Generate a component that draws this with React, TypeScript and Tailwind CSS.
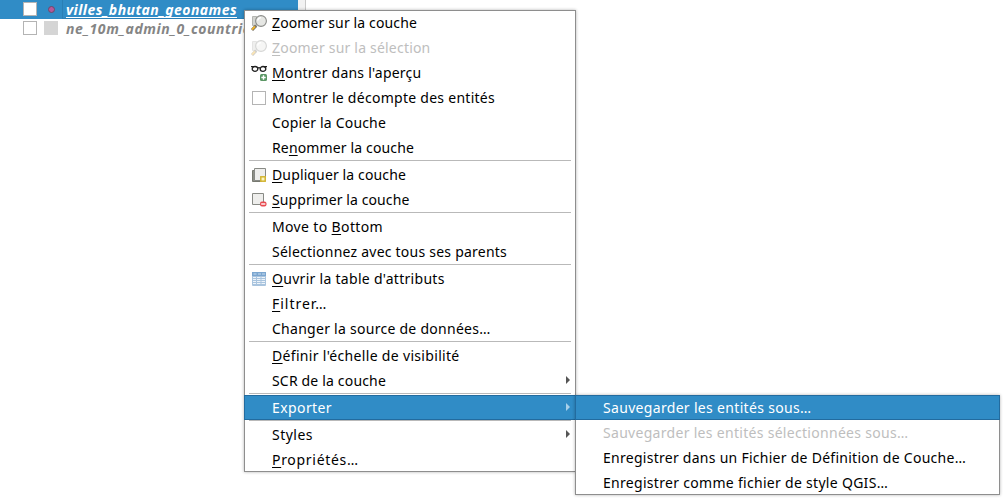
import type { ReactNode } from 'react';

type Entry = {
  label: string;
  tracking: string;
  mnemonic?: number;
  icon?: ReactNode;
  disabled?: boolean;
  active?: boolean;
  submenu?: boolean;
};

function ZoomIcon({ faded = false }: { faded?: boolean }) {
  return (
    <svg viewBox="0 0 16 16" className={faded ? 'size-4 opacity-35' : 'size-4'} fill="none">
      <path d="M1.5 1.5h4v9h-4z" fill="#d3d4d0" stroke="#b4b5b1" />
      <path d="M1 15l4.2-4.4" stroke="#77736a" strokeWidth="3" />
      <path d="M1 14.6l3-3.1" stroke="#f0b429" strokeWidth="1.8" />
      <circle cx="10" cy="6" r="5.4" fill="#e6e7e4" stroke="#8b8c89" strokeWidth="1.1" />
      <path d="M6.6 5.6a3.6 3.6 0 0 1 3.4-3" stroke="#fff" strokeWidth="1.2" />
    </svg>
  );
}

function GlassesIcon() {
  return (
    <svg viewBox="0 0 16 16" className="size-4" fill="none">
      <path d="M0 1.6h3M13 1.6h3M6.6 3.2q1.4-1 2.8 0" stroke="#222" strokeWidth="1.3" />
      <ellipse cx="4" cy="3.9" rx="2.8" ry="2.4" stroke="#222" strokeWidth="1.3" />
      <ellipse cx="12" cy="3.9" rx="2.8" ry="2.4" stroke="#222" strokeWidth="1.3" />
      <rect x="9" y="9" width="7" height="7" rx="1.5" fill="#5b9765" />
      <path d="M12.5 10.3v4.4M10.3 12.5h4.4" stroke="#fff" strokeWidth="1.4" />
    </svg>
  );
}

function DuplicateIcon() {
  return (
    <svg viewBox="0 0 16 16" className="size-4" fill="none">
      <path d="M1.5 3.5h9v11h-9z" fill="#8d8f88" stroke="#777970" />
      <path d="M3.5 1.5h11v12h-11z" fill="#eeeeec" stroke="#888a85" />
      <rect x="9.8" y="9.8" width="4.4" height="4.4" fill="#fcf4c0" stroke="#d2b432" strokeWidth="1.5" />
    </svg>
  );
}

function RemoveIcon() {
  return (
    <svg viewBox="0 0 16 16" className="size-4" fill="none">
      <path d="M1.5 1.5h11v11h-11z" fill="#eeeeec" stroke="#888a85" />
      <rect x="9" y="9.5" width="6.5" height="5" rx="2" fill="#e84a50" />
      <path d="M10.2 12h4.1" stroke="#fff" strokeWidth="1.4" />
    </svg>
  );
}

function TableIcon() {
  return (
    <svg viewBox="0 0 16 16" className="size-4" fill="none">
      <rect x="1" y="1" width="14" height="14" rx="1" fill="#a9c4de" />
      <path d="M1 1h14v4H1z" fill="#7ba6d0" />
      <path d="M2.5 3h3M7 3h3M11 3h3" stroke="#c8dcef" />
      <path d="M2 6.5h3M6 6.5h3.5M10.5 6.5H14M2 8.5h3M6 8.5h3.5M10.5 8.5H14M2 10.5h3M6 10.5h3.5M10.5 10.5H14M2 12.5h3M6 12.5h3.5M10.5 12.5H14" stroke="#eef4fa" />
    </svg>
  );
}

const groups: Entry[][] = [
  [
    { label: 'Zoomer sur la couche', mnemonic: 0, tracking: 'tracking-[0.132px]', icon: <ZoomIcon /> },
    { label: 'Zoomer sur la sélection', mnemonic: 0, tracking: 'tracking-[0.2px]', icon: <ZoomIcon faded />, disabled: true },
    { label: "Montrer dans l'aperçu", mnemonic: 0, tracking: 'tracking-[0.23px]', icon: <GlassesIcon /> },
    {
      label: 'Montrer le décompte des entités',
      tracking: 'tracking-[0.273px]',
      icon: <span className="ml-px size-[14px] border border-[#b4b4b4] bg-white" />,
    },
    { label: 'Copier la Couche', tracking: 'tracking-[0.175px]' },
    { label: 'Renommer la couche', mnemonic: 2, tracking: 'tracking-[0.142px]' },
  ],
  [
    { label: 'Dupliquer la couche', mnemonic: 0, tracking: 'tracking-[0.132px]', icon: <DuplicateIcon /> },
    { label: 'Supprimer la couche', mnemonic: 0, tracking: 'tracking-[0.095px]', icon: <RemoveIcon /> },
  ],
  [
    { label: 'Move to Bottom', mnemonic: 8, tracking: 'tracking-[0.362px]' },
    { label: 'Sélectionnez avec tous ses parents', tracking: 'tracking-[0.23px]' },
  ],
  [
    { label: "Ouvrir la table d'attributs", mnemonic: 0, tracking: 'tracking-[0.29px]', icon: <TableIcon /> },
    { label: 'Filtrer…', mnemonic: 0, tracking: 'tracking-[0.98px]' },
    { label: 'Changer la source de données…', tracking: 'tracking-[0.27px]' },
  ],
  [
    { label: "Définir l'échelle de visibilité", mnemonic: 0, tracking: 'tracking-[0.32px]' },
    { label: 'SCR de la couche', tracking: 'tracking-[0.172px]', submenu: true },
  ],
  [{ label: 'Exporter', tracking: 'tracking-[0.402px]', active: true, submenu: true }],
  [
    { label: 'Styles', tracking: 'tracking-[0.484px]', submenu: true },
    { label: 'Propriétés…', mnemonic: 0, tracking: 'tracking-[0.7px]' },
  ],
];

const exportEntries: Entry[] = [
  { label: 'Sauvegarder les entités sous…', tracking: 'tracking-[0.32px]', active: true },
  { label: 'Sauvegarder les entités sélectionnées sous…', tracking: 'tracking-[0.3px]', disabled: true },
  { label: 'Enregistrer dans un Fichier de Définition de Couche…', tracking: 'tracking-[0.268px]' },
  { label: 'Enregistrer comme fichier de style QGIS…', tracking: 'tracking-[0.298px]' },
];

function Label({ label, mnemonic, tracking }: Entry) {
  if (mnemonic === undefined) return <span className={tracking}>{label}</span>;
  return (
    <span className={tracking}>
      {label.slice(0, mnemonic)}
      <span className="underline decoration-1 underline-offset-[2px] [text-decoration-skip-ink:none]">{label[mnemonic]}</span>
      {label.slice(mnemonic + 1)}
    </span>
  );
}

function MenuRow(entry: Entry) {
  const color = entry.active
    ? 'relative z-10 border-[#226b9f] bg-[#308cc6] text-white'
    : entry.disabled
      ? 'border-transparent text-[#bebebe]'
      : 'border-transparent text-black';
  return (
    <li className={`flex h-[25px] items-center border pr-[5px] pl-[6px] ${color}`}>
      <span className="flex h-4 w-[21px] shrink-0 items-center">{entry.icon}</span>
      <span className="flex-1 whitespace-nowrap">
        <Label {...entry} />
      </span>
      {entry.submenu && (
        <svg viewBox="0 0 4 8" className={entry.active ? 'mt-[-1px] h-2 w-1 text-[#a8d0ea]' : 'mt-[-1px] h-2 w-1 text-[#555]'}>
          <path d="M0 0l4 4-4 4z" fill="currentColor" />
        </svg>
      )}
    </li>
  );
}

export default function App() {
  return (
    <main className="relative h-[504px] w-[1003px] overflow-hidden bg-white font-['Noto_Sans',sans-serif] text-[14px] leading-[23px]">
      <div className="flex h-[44px] w-[306px] border-r border-[#c8c8c8]">
        <ul className="w-[298px] overflow-hidden text-[14px] leading-[19px] font-bold italic">
          <li className="flex h-[19px] items-center bg-[#308cc6] pl-[23px] text-white">
            <span className="mt-[-1px] size-[14px] border border-[#b4b4b4] bg-white" />
            <span className="ml-[11px] size-[7px] rounded-full border border-[#6b4968] bg-[#b5599a]" />
            <span className="ml-[7px] flex h-[19px] flex-1 items-center border-b border-l border-[#2a7fb5] pl-[3px]">
              <span className="tracking-[0.441px] underline decoration-1 underline-offset-[2px] [text-decoration-skip-ink:none]">
                villes_bhutan_geonames
              </span>
            </span>
          </li>
          <li className="flex h-[19px] items-center pl-[23px] text-[#858585]">
            <span className="mt-[-1px] size-[14px] border border-[#b4b4b4] bg-white" />
            <span className="mt-[-1px] ml-[7px] size-[14px] bg-[#d5d5d5]" />
            <span className="mt-[-1px] ml-[8px] tracking-[0.57px] whitespace-nowrap">ne_10m_admin_0_countries</span>
          </li>
        </ul>
        <div className="flex-1 bg-[#f2f2f2]" />
      </div>

      <nav className="absolute top-[10px] left-[244px] w-[332px] bg-white shadow-[0_0_3px_rgba(0,0,0,0.3)]">
        {groups.map((group, i) => (
          <div key={group[0].label}>
            {i > 0 && <div className="mr-[5px] ml-[5px] h-[2px] border-t border-[#b9b9b9]" />}
            <ul>
              {group.map((entry) => (
                <MenuRow key={entry.label} {...entry} />
              ))}
            </ul>
          </div>
        ))}
        <div className="pointer-events-none absolute inset-0 border border-[#8e8e8e]" />
      </nav>

      <nav className="absolute top-[395px] left-[575px] z-20 w-[425px] bg-white shadow-[0_0_3px_rgba(0,0,0,0.3)]">
        <ul>
          {exportEntries.map((entry) => (
            <MenuRow key={entry.label} {...entry} />
          ))}
        </ul>
        <div className="pointer-events-none absolute inset-0 border border-[#8e8e8e]" />
      </nav>
    </main>
  );
}
